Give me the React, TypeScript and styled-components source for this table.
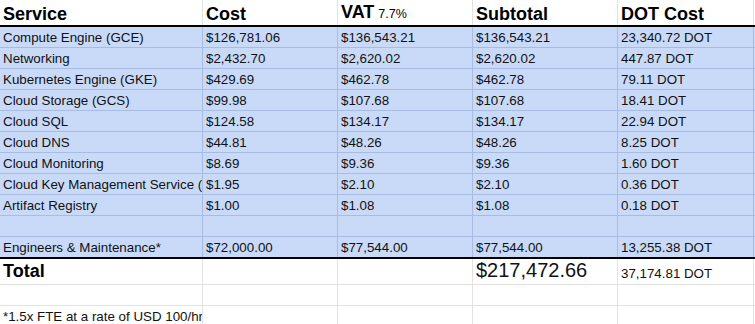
import React from 'react';
import styled, { createGlobalStyle, css } from 'styled-components';

const GlobalStyle = createGlobalStyle`
  html, body {
    margin: 0;
    padding: 0;
    background: #ffffff;
  }
  body {
    font-family: 'Liberation Sans', Arial, sans-serif;
    color: #000000;
  }
`;

const COLS = '203px 135px 135px 145px 136px';

const Sheet = styled.div`
  width: 755px;
  height: 324px;
  overflow: hidden;
  background: #ffffff;
`;

type RowKind = 'head' | 'blue' | 'last' | 'total' | 'plain';

const Row = styled.div<{ $kind: RowKind }>`
  display: grid;
  grid-template-columns: ${COLS};
  box-sizing: border-box;
  ${p => p.$kind === 'head' && css`
    height: 27px;
    border-bottom: 2px solid #000000;
  `}
  ${p => p.$kind === 'blue' && css`
    height: 21px;
    background: #c9daf8;
    border-bottom: 1px solid #a8bbe0;
  `}
  ${p => p.$kind === 'last' && css`
    height: 22px;
    background: #c9daf8;
    border-bottom: 2px solid #000000;
  `}
  ${p => p.$kind === 'total' && css`
    height: 26px;
    border-bottom: 1px solid #e2e2e2;
  `}
  ${p => p.$kind === 'plain' && css`
    height: 21px;
    border-bottom: 1px solid #e2e2e2;
  `}
`;

const Cell = styled.div<{ $blue?: boolean; $pad?: number }>`
  display: flex;
  align-items: flex-end;
  min-width: 0;
  box-sizing: border-box;
  padding: 0 0 ${p => p.$pad ?? 2}px 3px;
  border-right: 1px solid ${p => (p.$blue ? '#a8bbe0' : '#e2e2e2')};
  font-size: 13.33px;
  line-height: 15px;
  white-space: nowrap;
  overflow: hidden;
  color: #111111;
`;

const HeadText = styled.span`
  font-size: 18px;
  line-height: 20px;
  font-weight: 700;
  color: #000000;
`;

const Rate = styled.span`
  font-size: 12.5px;
  font-weight: 400;
  margin-left: 4px;
`;

const BigAmount = styled.span`
  font-size: 20px;
  line-height: 22px;
`;

type Line = [string, string, string, string, string];

const services: Line[] = [
  ['Compute Engine (GCE)', '$126,781.06', '$136,543.21', '$136,543.21', '23,340.72 DOT'],
  ['Networking', '$2,432.70', '$2,620.02', '$2,620.02', '447.87 DOT'],
  ['Kubernetes Engine (GKE)', '$429.69', '$462.78', '$462.78', '79.11 DOT'],
  ['Cloud Storage (GCS)', '$99.98', '$107.68', '$107.68', '18.41 DOT'],
  ['Cloud SQL', '$124.58', '$134.17', '$134.17', '22.94 DOT'],
  ['Cloud DNS', '$44.81', '$48.26', '$48.26', '8.25 DOT'],
  ['Cloud Monitoring', '$8.69', '$9.36', '$9.36', '1.60 DOT'],
  ['Cloud Key Management Service (', '$1.95', '$2.10', '$2.10', '0.36 DOT'],
  ['Artifact Registry', '$1.00', '$1.08', '$1.08', '0.18 DOT'],
  ['', '', '', '', ''],
];

const engineers: Line = ['Engineers & Maintenance*', '$72,000.00', '$77,544.00', '$77,544.00', '13,255.38 DOT'];

const BlueRow: React.FC<{ line: Line; last?: boolean }> = ({ line, last }) => (
  <Row $kind={last ? 'last' : 'blue'}>
    {line.map((text, i) => (
      <Cell key={i} $blue>{text}</Cell>
    ))}
  </Row>
);

const App: React.FC = () => {
  return (
    <>
      <GlobalStyle />
      <Sheet>
        <Row $kind="head">
          <Cell $pad={1}><HeadText>Service</HeadText></Cell>
          <Cell $pad={1}><HeadText>Cost</HeadText></Cell>
          <Cell $pad={1}>
            <HeadText>VAT<Rate>7.7%</Rate></HeadText>
          </Cell>
          <Cell $pad={1}><HeadText>Subtotal</HeadText></Cell>
          <Cell $pad={1}><HeadText>DOT Cost</HeadText></Cell>
        </Row>
        {services.map((line, i) => (
          <BlueRow key={i} line={line} />
        ))}
        <BlueRow line={engineers} last />
        <Row $kind="total">
          <Cell $pad={3}><HeadText>Total</HeadText></Cell>
          <Cell $pad={3} />
          <Cell $pad={3} />
          <Cell $pad={3}><BigAmount>$217,472.66</BigAmount></Cell>
          <Cell $pad={3}>37,174.81 DOT</Cell>
        </Row>
        <Row $kind="plain">
          <Cell /><Cell /><Cell /><Cell /><Cell />
        </Row>
        <Row $kind="plain">
          <Cell>*1.5x FTE at a rate of USD 100/hr</Cell>
          <Cell /><Cell /><Cell /><Cell />
        </Row>
      </Sheet>
    </>
  );
};

export default App;
